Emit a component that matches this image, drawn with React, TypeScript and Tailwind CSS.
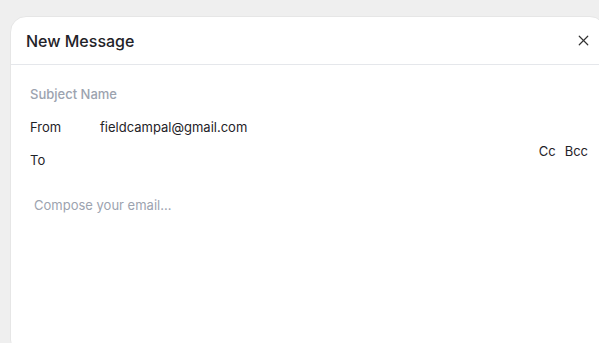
import { X } from 'lucide-react';

export default function App() {
    return (
        <div className="min-h-[343px] bg-[#efefef] pt-[16px] pl-[10px] overflow-hidden" style={{ fontFamily: 'Inter, "Liberation Sans", sans-serif' }}>
            <div className="w-[596px] h-[340px] bg-white rounded-2xl border border-[#e6e6e6] flex flex-col">
                {/* Header */}
                <div className="h-[48px] flex items-center justify-between pl-[15px] pr-[13px] border-b border-[#e5e7eb]">
                    <h2 className="text-[16px] font-medium text-[#1f2328] leading-none">New Message</h2>
                    <X className="w-[17px] h-[17px] text-[#333]" strokeWidth={1.7} />
                </div>

                {/* Fields */}
                <div className="pl-[19px] pr-[17px] pt-[20px] text-[13px]">
                    <div className="h-[20px] flex items-center text-[#9ca3af] font-medium">Subject Name</div>
                    <div className="mt-[13px] h-[20px] flex items-center text-[#1f2328]">
                        <span className="w-[70px]">From</span>
                        <span>fieldcampal@gmail.com</span>
                    </div>
                    <div className="mt-[11px] flex items-start justify-between text-[#1f2328]">
                        <span className="pt-[1px] leading-[20px]">To</span>
                        <div className="flex gap-[9px] -mt-[8px] leading-[20px]">
                            <span>Cc</span>
                            <span>Bcc</span>
                        </div>
                    </div>
                    <div className="mt-[26px] pl-[4px] h-[20px] flex items-center text-[#9ca3af]">Compose your email...</div>
                </div>
            </div>
        </div>
    );
}
